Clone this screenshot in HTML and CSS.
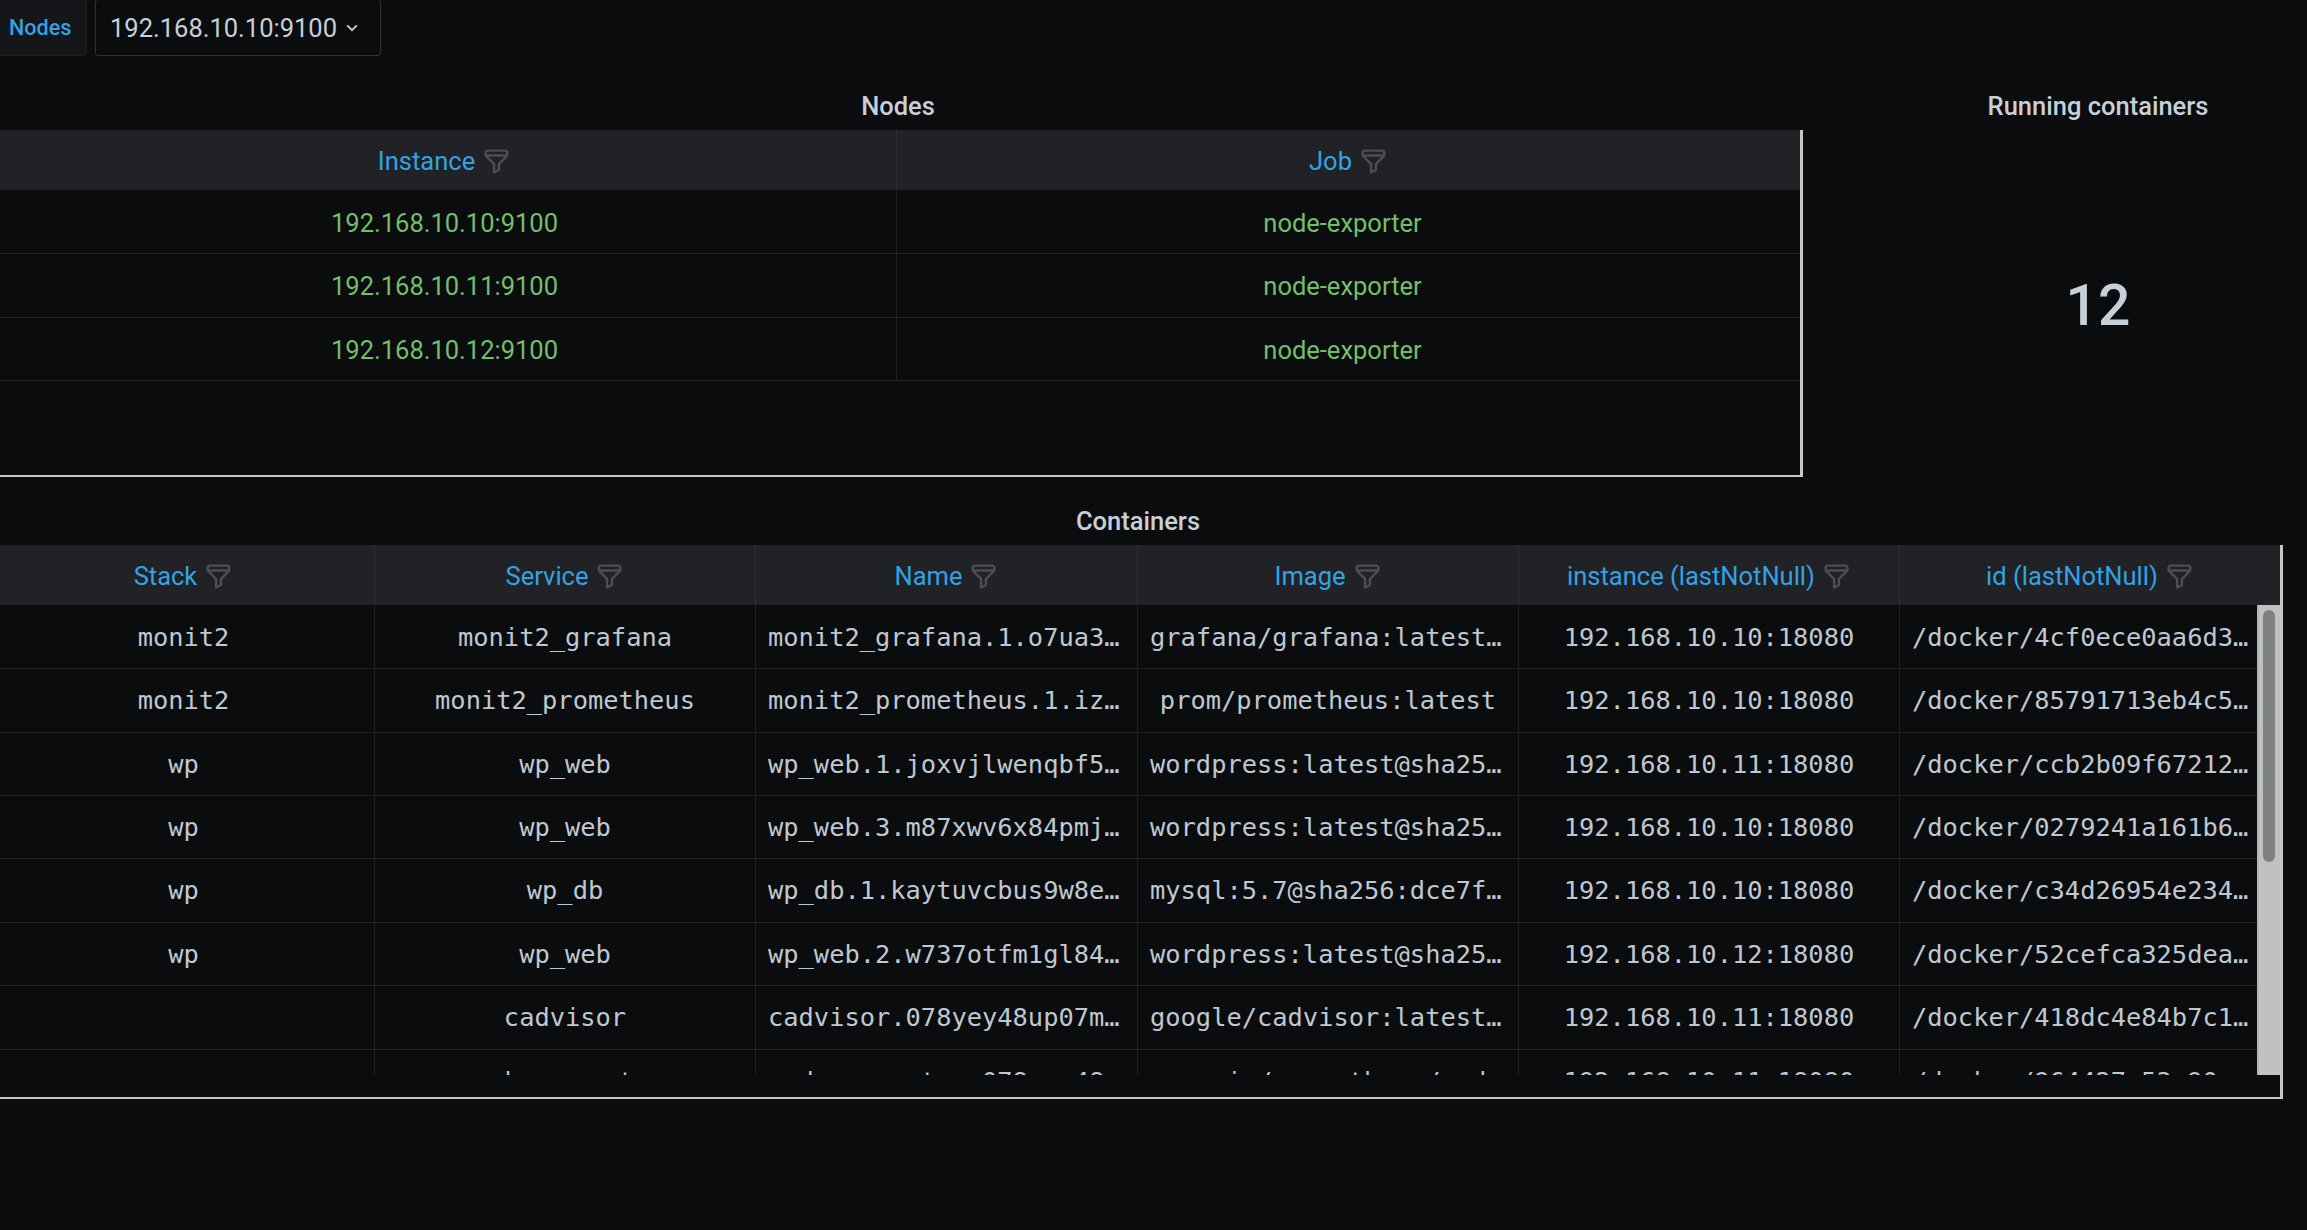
FILE: index.html
```html
<!DOCTYPE html>
<html lang="en">
<head>
    <meta charset="UTF-8">
    <meta name="viewport" content="width=device-width, initial-scale=1.0">
    <title>Docker Swarm Monitoring</title>
    <link rel="stylesheet" href="styles.css">
</head>
<body>
    <svg class="defs" width="0" height="0">
        <symbol id="filter" viewBox="0 0 24 24">
            <path d="M19,2H5A3,3,0,0,0,2,5V6.17a3,3,0,0,0,.25,1.2l0,.06a2.81,2.81,0,0,0,.59.86L9,14.41V21a1,1,0,0,0,.47.85A1,1,0,0,0,10,22a1,1,0,0,0,.45-.11l4-2A1,1,0,0,0,15,19V14.41l6.12-6.12a2.81,2.81,0,0,0,.59-.86l0-.06a3,3,0,0,0,.28-1.2V5A3,3,0,0,0,19,2ZM13.29,13.29A1,1,0,0,0,13,14v4.38l-2,1V14a1,1,0,0,0-.29-.71L5.41,8H18.59ZM20,6H4V5A1,1,0,0,1,5,4H19a1,1,0,0,1,1,1Z"/>
        </symbol>
    </svg>

    <div class="page">
        <div class="varbar">
            <label class="var-label">Nodes</label>
            <div class="var-select">
                <span>192.168.10.10:9100</span>
                <svg class="chevron" viewBox="0 0 12 8"><path d="M1.2 1.4 6 6.2l4.8-4.8"/></svg>
            </div>
        </div>

        <div class="top-row">
            <div class="panel nodes-panel">
                <div class="panel-title">Nodes</div>
                <div class="table nodes-table">
                    <div class="row head">
                        <div class="cell">Instance<svg class="filter-icon"><use href="#filter"/></svg></div>
                        <div class="cell">Job<svg class="filter-icon"><use href="#filter"/></svg></div>
                    </div>
                    <div class="row">
                        <div class="cell green">192.168.10.10:9100</div>
                        <div class="cell green job">node-exporter</div>
                    </div>
                    <div class="row">
                        <div class="cell green">192.168.10.11:9100</div>
                        <div class="cell green job">node-exporter</div>
                    </div>
                    <div class="row">
                        <div class="cell green">192.168.10.12:9100</div>
                        <div class="cell green job">node-exporter</div>
                    </div>
                </div>
            </div>
            <div class="panel stat-panel">
                <div class="panel-title">Running containers</div>
                <div class="stat-value">12</div>
            </div>
        </div>

        <div class="panel containers-panel">
            <div class="panel-title">Containers</div>
            <div class="table containers-table">
                <div class="row head">
                    <div class="cell">Stack<svg class="filter-icon"><use href="#filter"/></svg></div>
                    <div class="cell">Service<svg class="filter-icon"><use href="#filter"/></svg></div>
                    <div class="cell">Name<svg class="filter-icon"><use href="#filter"/></svg></div>
                    <div class="cell">Image<svg class="filter-icon"><use href="#filter"/></svg></div>
                    <div class="cell">instance (lastNotNull)<svg class="filter-icon"><use href="#filter"/></svg></div>
                    <div class="cell">id (lastNotNull)<svg class="filter-icon"><use href="#filter"/></svg></div>
                </div>
                <div class="scroll-area">
                    <div class="rows">
                        <div class="row">
                            <div class="cell">monit2</div>
                            <div class="cell">monit2_grafana</div>
                            <div class="cell">monit2_grafana.1.o7ua3kd92xq</div>
                            <div class="cell">grafana/grafana:latest@sha256:8f2</div>
                            <div class="cell">192.168.10.10:18080</div>
                            <div class="cell">/docker/4cf0ece0aa6d3b71e09c2</div>
                        </div>
                        <div class="row">
                            <div class="cell">monit2</div>
                            <div class="cell">monit2_prometheus</div>
                            <div class="cell">monit2_prometheus.1.izq7d4m2</div>
                            <div class="cell">prom/prometheus:latest</div>
                            <div class="cell">192.168.10.10:18080</div>
                            <div class="cell">/docker/85791713eb4c5a02d81f6</div>
                        </div>
                        <div class="row">
                            <div class="cell">wp</div>
                            <div class="cell">wp_web</div>
                            <div class="cell">wp_web.1.joxvjlwenqbf5t8s</div>
                            <div class="cell">wordpress:latest@sha256:4e1a</div>
                            <div class="cell">192.168.10.11:18080</div>
                            <div class="cell">/docker/ccb2b09f672129ae4d03b</div>
                        </div>
                        <div class="row">
                            <div class="cell">wp</div>
                            <div class="cell">wp_web</div>
                            <div class="cell">wp_web.3.m87xwv6x84pmjc2r</div>
                            <div class="cell">wordpress:latest@sha256:4e1a</div>
                            <div class="cell">192.168.10.10:18080</div>
                            <div class="cell">/docker/0279241a161b6e83c5d07</div>
                        </div>
                        <div class="row">
                            <div class="cell">wp</div>
                            <div class="cell">wp_db</div>
                            <div class="cell">wp_db.1.kaytuvcbus9w8e2hn</div>
                            <div class="cell">mysql:5.7@sha256:dce7fa3b90</div>
                            <div class="cell">192.168.10.10:18080</div>
                            <div class="cell">/docker/c34d26954e2341fb07a6c</div>
                        </div>
                        <div class="row">
                            <div class="cell">wp</div>
                            <div class="cell">wp_web</div>
                            <div class="cell">wp_web.2.w737otfm1gl84n6y</div>
                            <div class="cell">wordpress:latest@sha256:4e1a</div>
                            <div class="cell">192.168.10.12:18080</div>
                            <div class="cell">/docker/52cefca325dea90c71e84</div>
                        </div>
                        <div class="row">
                            <div class="cell"></div>
                            <div class="cell">cadvisor</div>
                            <div class="cell">cadvisor.078yey48up07mz1k</div>
                            <div class="cell">google/cadvisor:latest@sha256</div>
                            <div class="cell">192.168.10.11:18080</div>
                            <div class="cell">/docker/418dc4e84b7c1f20ad963</div>
                        </div>
                        <div class="row">
                            <div class="cell"></div>
                            <div class="cell">node-exporter</div>
                            <div class="cell">node-exporter.078yey48up07m</div>
                            <div class="cell">quay.io/prometheus/node-exporter</div>
                            <div class="cell">192.168.10.11:18080</div>
                            <div class="cell">/docker/964427e53e90a8b1c4d72</div>
                        </div>
                    </div>
                    <div class="scroll-track">
                        <div class="scroll-thumb"></div>
                    </div>
                </div>
                <div class="table-foot"></div>
            </div>
        </div>
    </div>
</body>
</html>
```

FILE: styles.css
```css
body {
    margin: 0;
    background-color: #0b0c0e;
    color: #c7d0d9;
    font-family: Roboto, "Liberation Sans", sans-serif;
    font-size: 25.5px;
    overflow: hidden;
    height: 1230px;
}
.defs {
    display: block;
}
.page {
    margin-left: -7px;
    width: 2290px;
}

/* variable bar */
.varbar {
    display: flex;
    height: 57px;
    margin-top: -1px;
    gap: 8px;
}
.var-label {
    display: flex;
    align-items: center;
    padding: 0 16px 0 15px;
    width: 61px;
    font-size: 21.6px;
    font-weight: 500;
    color: #33a2e5;
    background: #141619;
    border: 1px solid #202226;
    border-radius: 3px;
}
.var-select {
    display: flex;
    align-items: center;
    width: 249px;
    padding: 0 21px 0 14px;
    gap: 9px;
    border: 1px solid #2c3235;
    border-radius: 3px;
}
.chevron {
    width: 12px;
    height: 8px;
    fill: none;
    stroke: #c7d0d9;
    stroke-width: 1.8;
}

/* panels */
.top-row {
    display: flex;
    margin-top: 28px;
}
.panel-title {
    height: 46px;
    line-height: 44px;
    text-align: center;
    font-weight: 500;
}
.nodes-panel {
    width: 1810px;
}
.stat-panel {
    width: 416px;
    margin-left: auto;
    margin-right: -23px;
    display: flex;
    flex-direction: column;
}
.stat-value {
    flex: 1;
    display: flex;
    align-items: center;
    justify-content: center;
    font-size: 57px;
    font-weight: 500;
    padding-top: 4px;
}
.containers-panel {
    margin-top: 22px;
}

/* tables */
.table {
    border-right: 3px solid #c7c8c4;
    border-bottom: 2px solid #c7c8c4;
}
.nodes-table {
    height: 345px;
}
.row {
    display: grid;
    height: 63.36px;
    box-sizing: border-box;
    border-bottom: 1px solid #202226;
}
.nodes-table .row {
    grid-template-columns: 904px 1fr;
}
.containers-table .row {
    grid-template-columns: 382px 381px 382px 381px 381px 1fr;
}
.cell {
    padding: 0 12px;
    line-height: 65px;
    text-align: center;
    white-space: nowrap;
    overflow: hidden;
    text-overflow: ellipsis;
    border-right: 1px solid #202226;
    min-width: 0;
}
.cell:last-child {
    border-right: none;
}
.job {
    padding-right: 24px;
}
.rows .cell {
    font-family: "DejaVu Sans Mono", "Liberation Mono", monospace;
    font-size: 25.4px;
    line-height: 63px;
    color: #bfc8d1;
}
.rows .cell:last-child {
    padding-right: 8px;
}
.green {
    color: #73bf69;
}
.head {
    height: 60px;
    margin-bottom: 1px;
    background: #202226;
    border-bottom: none;
}
.head .cell {
    display: flex;
    align-items: center;
    justify-content: center;
    gap: 7px;
    box-sizing: border-box;
    padding-top: 3px;
    line-height: 57px;
    color: #33a2e5;
    border-right-color: #2c2e33;
}
.filter-icon {
    width: 29px;
    height: 29px;
    fill: #4c4e54;
    flex: none;
}

/* body with its scrollbar */
.scroll-area {
    display: flex;
    height: 469px;
}
.rows {
    flex: 1;
    min-width: 0;
    overflow: hidden;
}
.scroll-track {
    flex: none;
    width: 23px;
    box-sizing: border-box;
    margin-top: -1px;
    padding: 5px 5px 0 4px;
    background: #c1c2c0;
    border-left: 2px solid #b4b5b3;
}
.scroll-thumb {
    width: 12px;
    height: 252px;
    background: #7e8282;
    border-radius: 6px;
}
.table-foot {
    height: 22px;
}
```
